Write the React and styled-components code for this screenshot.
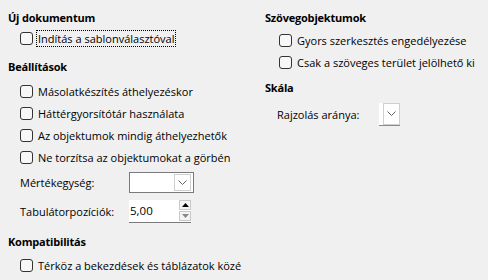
import React from "react";
import styled, { createGlobalStyle } from "styled-components";

const Global = createGlobalStyle`
  html, body { margin: 0; padding: 0; background: #f0f0f0; }
  body { font-family: "Open Sans", "Noto Sans", sans-serif; font-size: 11px; color: #000; }
  * { box-sizing: border-box; }
`;

const Page = styled.div`
  width: 488px;
  height: 280px;
  padding: 8px 0 0 8px;
  display: grid;
  grid-template-columns: 257px 1fr;
  background: #f0f0f0;
`;

const Column = styled.div`
  display: flex;
  flex-direction: column;
`;

const Section = styled.section`
  display: flex;
  flex-direction: column;
  margin-top: ${(p) => p.$top || 0}px;
`;

const Heading = styled.div`
  height: 20px;
  line-height: 20px;
  font-weight: 700;
  letter-spacing: -0.2px;
  white-space: nowrap;
`;

const Items = styled.div`
  display: flex;
  flex-direction: column;
  margin-top: ${(p) => p.$offset || 0}px;
  padding-left: ${(p) => p.$indent || 12}px;
`;

const CheckRow = styled.label`
  height: ${(p) => p.$h || 22}px;
  display: flex;
  align-items: center;
  gap: 3px;
  white-space: nowrap;
`;

const Box = styled.span`
  width: 13px;
  height: 13px;
  border: 1px solid #333;
  border-radius: 3px;
  background: #f7f7f7;
  flex: none;
`;

const Text = styled.span`
  padding: 0 1px;
  line-height: 15px;
  border: 1px solid ${(p) => (p.$focus ? "#000" : "transparent")};
  border-style: ${(p) => (p.$focus ? "dotted" : "solid")};
`;

const FieldRow = styled.div`
  height: ${(p) => p.$h}px;
  display: flex;
  align-items: center;
  white-space: nowrap;
`;

const FieldLabel = styled.span`
  width: ${(p) => p.$w}px;
  flex: none;
`;

const Combo = styled.div`
  width: ${(p) => p.$w}px;
  height: ${(p) => p.$h}px;
  background: #fff;
  border: 1px solid #7a7a7a;
  display: flex;
  justify-content: flex-end;
  align-items: center;
  padding-right: 2px;
`;

const NarrowCombo = styled.div`
  width: ${(p) => p.$w}px;
  height: ${(p) => p.$h}px;
  background: #fff;
  border-bottom: 1px solid #8a8a8a;
  display: flex;
  justify-content: flex-end;
  align-items: stretch;
`;

const DropButton = styled.div`
  width: ${(p) => p.$w || 17}px;
  height: ${(p) => (p.$full ? "auto" : "17px")};
  border: 1px solid #d0d0d0;
  background: #fff;
  display: flex;
  align-items: center;
  justify-content: center;
`;

const Spin = styled.div`
  width: 62px;
  height: 23px;
  background: #fff;
  border-bottom: 1px solid #7a7a7a;
  display: flex;
  align-items: center;
  justify-content: space-between;
  padding: 0 0 0 1px;
`;

const SpinValue = styled.span`
  line-height: 16px;
  font-size: 11.5px;
`;

const SpinButtons = styled.div`
  display: flex;
  flex-direction: column;
  gap: 1px;
  align-self: stretch;
  padding: 0 0 1px;
`;

const SpinButton = styled.div`
  width: 12px;
  flex: 1;
  border: 1px solid #c8c8c8;
  background: #f4f4f4;
  display: flex;
  align-items: center;
  justify-content: center;
`;

const Chevron = () => (
  <svg width="9" height="5" viewBox="0 0 9 5">
    <path d="M0.5 0.5 L4.5 4.5 L8.5 0.5" fill="none" stroke="#606060" strokeWidth="1" />
  </svg>
);

const Tri = ({ up, color }) => (
  <svg width="7" height="4" viewBox="0 0 7 4">
    <path d={up ? "M0 4 L3.5 0 L7 4 Z" : "M0 0 L3.5 4 L7 0 Z"} fill={color} />
  </svg>
);

const Check = ({ children, focus, h }) => (
  <CheckRow $h={h}>
    <Box />
    <Text $focus={focus}>{children}</Text>
  </CheckRow>
);

export default function App() {
  return (
    <>
      <Global />
      <Page>
        <Column>
          <Section>
            <Heading>Új dokumentum</Heading>
            <Items $offset={-1}>
              <Check focus>Indítás a sablonválasztóval</Check>
            </Items>
          </Section>
          <Section $top={8}>
            <Heading>Beállítások</Heading>
            <Items $offset={3}>
              <Check>Másolatkészítés áthelyezéskor</Check>
              <Check>Háttérgyorsítótár használata</Check>
              <Check>Az objektumok mindig áthelyezhetők</Check>
              <Check>Ne torzítsa az objektumokat a görbén</Check>
              <FieldRow $h={29}>
                <FieldLabel $w={109}>Mértékegység:</FieldLabel>
                <Combo $w={65} $h={21}>
                  <DropButton>
                    <Chevron />
                  </DropButton>
                </Combo>
              </FieldRow>
              <FieldRow $h={29}>
                <FieldLabel $w={109}>Tabulátorpozíciók:</FieldLabel>
                <Spin>
                  <SpinValue>5,00</SpinValue>
                  <SpinButtons>
                    <SpinButton>
                      <Tri up color="#000" />
                    </SpinButton>
                    <SpinButton>
                      <Tri color="#888" />
                    </SpinButton>
                  </SpinButtons>
                </Spin>
              </FieldRow>
            </Items>
          </Section>
          <Section $top={6}>
            <Heading>Kompatibilitás</Heading>
            <Items $offset={2}>
              <Check>Térköz a bekezdések és táblázatok közé</Check>
            </Items>
          </Section>
        </Column>
        <Column>
          <Section>
            <Heading>Szövegobjektumok</Heading>
            <Items $offset={1} $indent={14}>
              <Check>Gyors szerkesztés engedélyezése</Check>
              <Check>Csak a szöveges terület jelölhető ki</Check>
            </Items>
          </Section>
          <Section $top={5}>
            <Heading>Skála</Heading>
            <Items $offset={3} $indent={12}>
              <FieldRow $h={26}>
                <FieldLabel $w={102}>Rajzolás aránya:</FieldLabel>
                <NarrowCombo $w={21} $h={23}>
                  <DropButton $w={17} $full>
                    <Chevron />
                  </DropButton>
                </NarrowCombo>
              </FieldRow>
            </Items>
          </Section>
        </Column>
      </Page>
    </>
  );
}
